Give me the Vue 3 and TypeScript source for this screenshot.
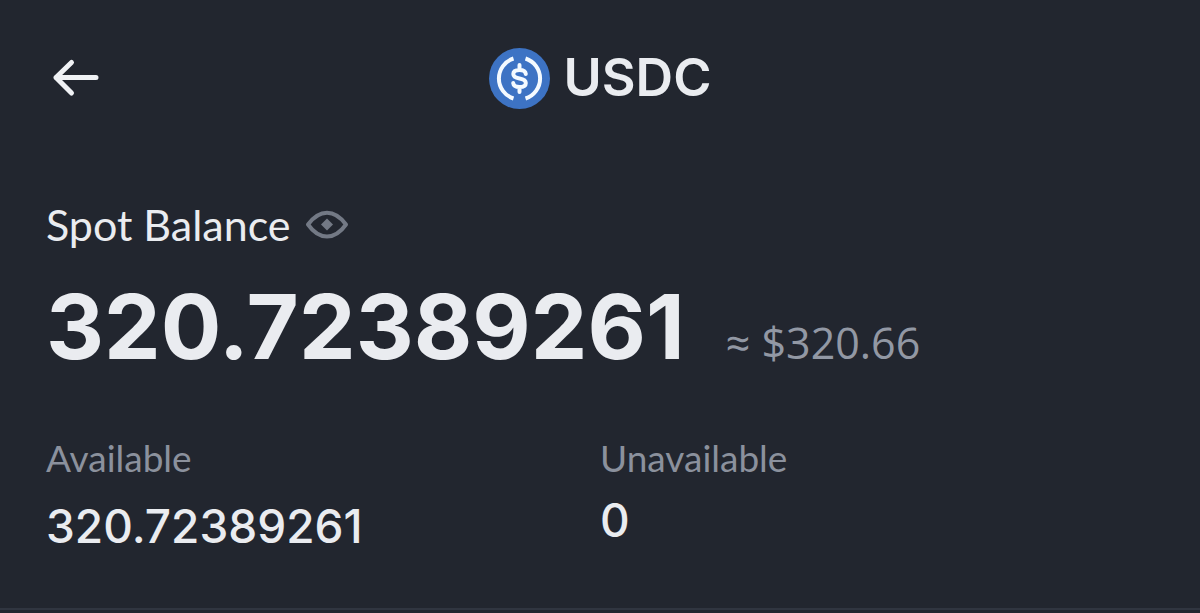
<script setup lang="ts">
import { computed, ref } from 'vue'

interface Holding {
  label: string
  value: string
  compact?: boolean
}

const asset = 'USDC'
const balance = '320.72389261'
const fiat = '$320.66'
const holdings: Holding[] = [
  { label: 'Available', value: '320.72389261' },
  { label: 'Unavailable', value: '0', compact: true },
]

const hidden = ref(false)
const mask = (text: string): string => (hidden.value ? '******' : text)
const toggleLabel = computed(() => (hidden.value ? 'Show balance' : 'Hide balance'))
</script>

<template>
  <main class="wallet">
    <header class="bar">
      <button class="icon-button" type="button" aria-label="Back">
        <svg class="back" viewBox="0 0 48 40" aria-hidden="true">
          <path d="M19.500 4.500 4 19.500 19.500 35M4 19.500H44" />
        </svg>
      </button>
      <h1 class="asset">
        <svg class="coin" viewBox="0 0 61 61" aria-hidden="true">
          <circle class="coin-disc" cx="30.500" cy="30.500" r="30.500" />
          <path class="coin-ring" d="M24.500 10.500A21 21 0 0 0 24.500 50.500M36.500 10.500A21 21 0 0 1 36.500 50.500" />
          <path
            class="coin-sign"
            d="M30.500 17v5M30.500 39v5M36.800 26C36.500 23.200 34.500 22 30.500 22S24.300 23.500 24.300 26C24.300 29 26.500 29.800 30.500 30.500S36.800 32 36.800 35C36.800 37.800 34.500 39 30.500 39S24.500 37.800 24.200 35"
          />
        </svg>
        <span>{{ asset }}</span>
      </h1>
    </header>

    <section class="balance">
      <div class="caption">
        <h2 class="title">Spot Balance</h2>
        <button class="icon-button" type="button" :aria-label="toggleLabel" @click="hidden = !hidden">
          <svg class="eye" viewBox="0 0 44 30" aria-hidden="true">
            <path class="eye-lid" d="M3 14.500C9 6.500 15 2.800 22 2.800S35 6.500 41 14.500C35 23 29 26.500 22 26.500S9 23 3 14.500Z" />
            <path class="eye-pupil" d="M22 8.500l6 6-6 6-6-6Z" />
          </svg>
        </button>
      </div>
      <div class="amounts">
        <strong class="total">{{ mask(balance) }}</strong>
        <span class="fiat">≈ {{ mask(fiat) }}</span>
      </div>
    </section>

    <dl class="holdings">
      <div v-for="item in holdings" :key="item.label">
        <dt>{{ item.label }}</dt>
        <dd :class="{ compact: item.compact }">{{ mask(item.value) }}</dd>
      </div>
    </dl>
  </main>
</template>

<style>
body {
  margin: 0;
  background: #22262f;
}
</style>

<style scoped>
.wallet {
  padding: 43px 46px 50px;
  background: #22262f;
  border-bottom: 2px solid #303540;
  color: #eaecf0;
  font-family: Lato, 'Open Sans', sans-serif;
}

.bar {
  display: grid;
  grid-template-columns: 1fr auto 1fr;
  align-items: center;
}

.icon-button {
  display: flex;
  justify-self: start;
  padding: 0;
  border: 0;
  background: none;
  cursor: pointer;
}

.back {
  width: 48px;
  height: 40px;
  margin-left: 6px;
  fill: none;
  stroke: #f0f2f5;
  stroke-width: 5;
  stroke-linecap: round;
  stroke-linejoin: round;
}

.asset {
  display: flex;
  align-items: center;
  gap: 14px;
  margin: 0;
  font-family: Inter, 'Open Sans', sans-serif;
  font-size: 52px;
  font-weight: 600;
  line-height: 70px;
}

.coin {
  width: 61px;
  height: 61px;
}

.coin-disc {
  fill: #3d73c4;
}

.coin-ring,
.coin-sign {
  fill: none;
  stroke: #f4faff;
  stroke-width: 4;
}

.coin-sign {
  stroke-linecap: round;
}

.balance {
  margin-top: 86px;
}

.caption {
  display: flex;
  align-items: center;
  gap: 14px;
}

.title {
  margin: 0;
  font-size: 43px;
  font-weight: 400;
  line-height: 52px;
}

.eye {
  width: 44px;
  height: 30px;
}

.eye-lid {
  fill: none;
  stroke: #737985;
  stroke-width: 4;
  stroke-linejoin: round;
}

.eye-pupil {
  fill: #737985;
}

.amounts {
  display: flex;
  align-items: baseline;
  gap: 41px;
  margin-top: 18px;
}

.total {
  font-family: Inter, 'Open Sans', sans-serif;
  font-size: 90px;
  font-weight: 700;
  line-height: 116px;
}

.fiat {
  color: #9298a4;
  font-family: 'Open Sans', sans-serif;
  font-size: 43px;
  font-weight: 400;
  line-height: 56px;
}

.holdings {
  display: grid;
  grid-template-columns: 1fr 1fr;
  margin: 49px 0 0;
}

dt {
  color: #8b919d;
  font-size: 37px;
  line-height: 48px;
}

dd {
  margin: 12px 0 0;
  font-family: Inter, 'Open Sans', sans-serif;
  font-size: 46px;
  font-weight: 500;
  line-height: 64px;
}

dd.compact {
  line-height: 52px;
}
</style>
